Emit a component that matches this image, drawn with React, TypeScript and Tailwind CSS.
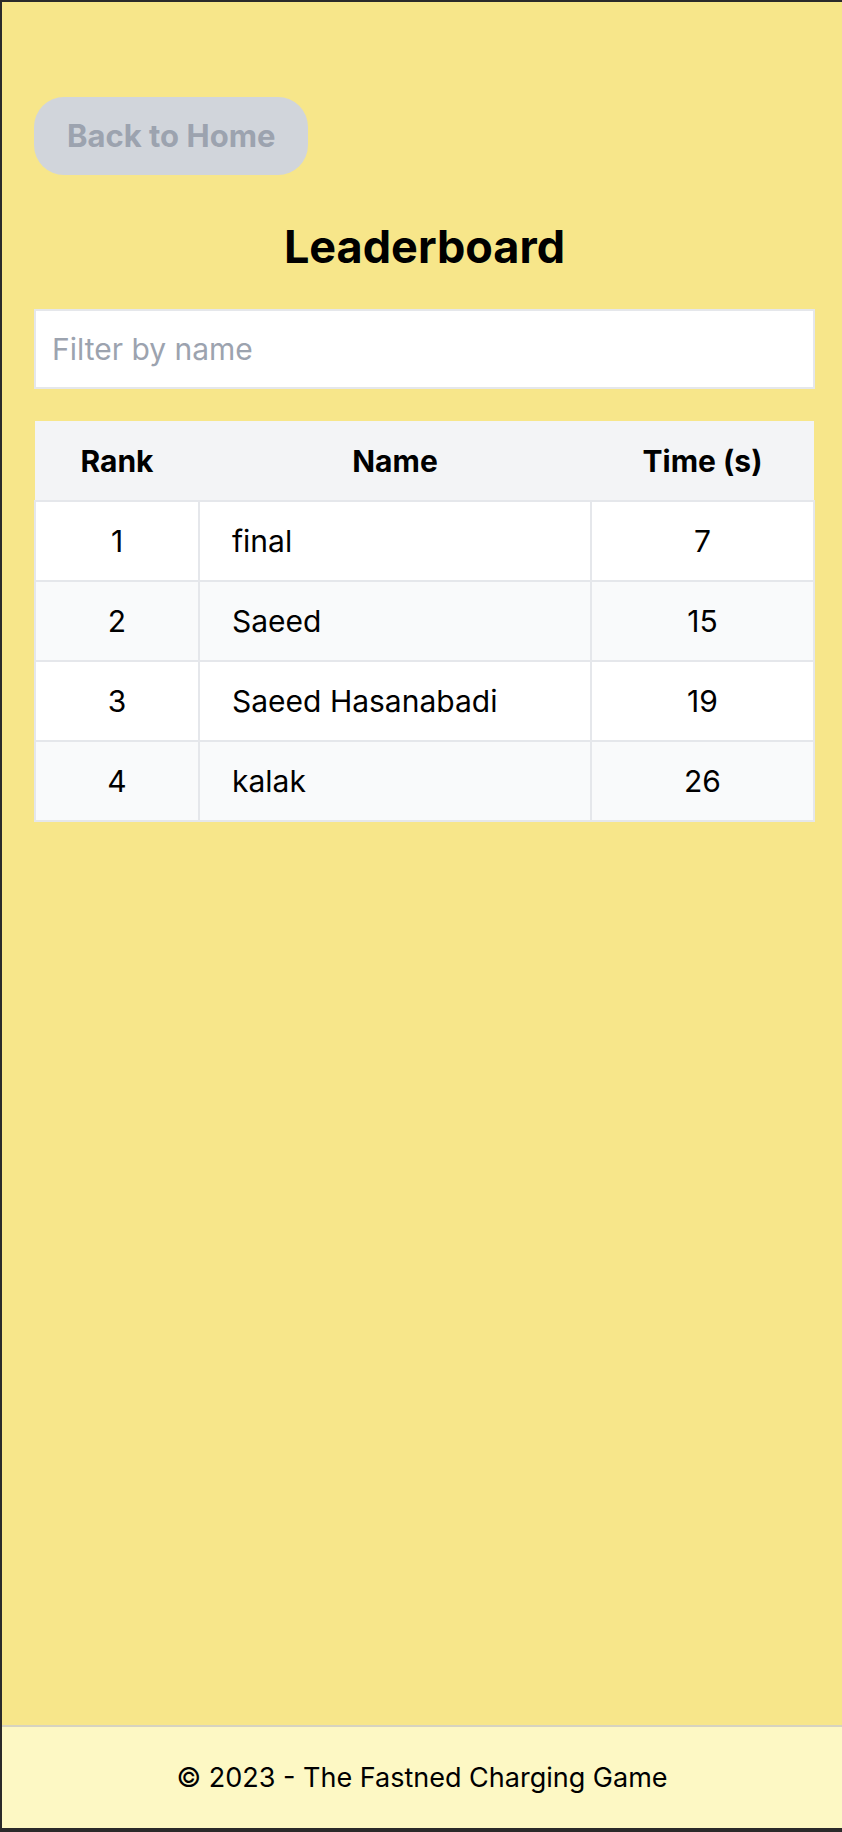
import React from "react";

const rows = [
  { rank: 1, name: "final", time: 7 },
  { rank: 2, name: "Saeed", time: 15 },
  { rank: 3, name: "Saeed Hasanabadi", time: 19 },
  { rank: 4, name: "kalak", time: 26 },
];

export default function App() {
  return (
    <div
      className="flex h-[1832px] flex-col border-t-2 border-l-2 border-b-4 border-[#2a2a2a] bg-[#f7e68a] text-black"
      style={{ fontFamily: "Inter, 'Noto Sans', sans-serif" }}
    >
      <main className="flex-1 pl-[32px] pr-[27px] pt-[95px]">
        <button className="rounded-[30px] bg-[#d1d5db] px-[33px] py-[18px] text-[31px] font-bold leading-[42px] text-[#9ca3af]">
          Back to Home
        </button>
        <h1 className="mt-[45px] text-center text-[45px] font-bold leading-[54px]">
          Leaderboard
        </h1>
        <input
          type="text"
          placeholder="Filter by name"
          className="mt-[35px] block h-[80px] w-full border-2 border-[#e5e7eb] bg-white px-[16px] text-[30px] leading-[42px] outline-none placeholder:text-[#9ca3af]"
        />
        <table className="mt-[32px] w-full border-collapse text-[30px] leading-[42px]">
          <thead>
            <tr className="bg-[#f3f4f6]">
              <th className="h-[80px] w-[164px] text-center font-bold">Rank</th>
              <th className="h-[80px] text-center font-bold">Name</th>
              <th className="h-[80px] w-[223px] text-center font-bold">Time (s)</th>
            </tr>
          </thead>
          <tbody>
            {rows.map((r, i) => (
              <tr key={r.rank} className={i % 2 === 0 ? "bg-white" : "bg-[#f9fafb]"}>
                <td className="h-[80px] border-2 border-[#e5e7eb] text-center">{r.rank}</td>
                <td className="h-[80px] border-2 border-[#e5e7eb] pl-[32px] text-left">{r.name}</td>
                <td className="h-[80px] border-2 border-[#e5e7eb] text-center">{r.time}</td>
              </tr>
            ))}
          </tbody>
        </table>
      </main>
      <footer className="flex h-[103px] items-center justify-center border-t-2 border-[#d6d3c0] bg-[#fdf8c4] text-[27px] leading-[36px]">
        © 2023 - The Fastned Charging Game
      </footer>
    </div>
  );
}
